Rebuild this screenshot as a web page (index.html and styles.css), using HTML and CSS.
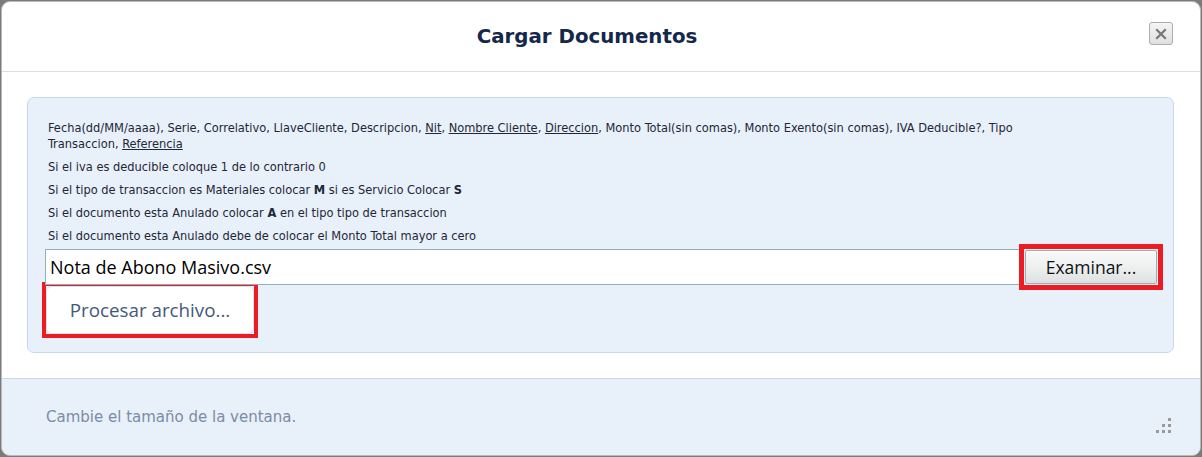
FILE: index.html
```html
<!DOCTYPE html>
<html lang="es">
<head>
<meta charset="utf-8">
<title>Cargar Documentos</title>
<link rel="stylesheet" href="styles.css">
</head>
<body>
<div class="dialog">
  <header class="dlg-head">
    <h1 class="dlg-title">Cargar Documentos</h1>
    <button class="close-btn" aria-label="Cerrar">
      <svg width="12" height="12" viewBox="0 0 12 12"><path d="M2 2 L10 10 M10 2 L2 10" stroke="#777" stroke-width="2.2" stroke-linecap="square"/></svg>
    </button>
  </header>
  <main class="dlg-body">
    <section class="panel">
      <p class="info">Fecha(dd/MM/aaaa), Serie, Correlativo, LlaveCliente, Descripcion, <u>Nit</u>, <u>Nombre Cliente</u>, <u>Direccion</u>, Monto Total(sin comas), Monto Exento(sin comas), IVA Deducible?, Tipo<br>Transaccion, <u>Referencia</u></p>
      <p class="info">Si el iva es deducible coloque 1 de lo contrario 0</p>
      <p class="info">Si el tipo de transaccion es Materiales colocar <b>M</b> si es Servicio Colocar <b>S</b></p>
      <p class="info">Si el documento esta Anulado colocar <b>A</b> en el tipo tipo de transaccion</p>
      <p class="info">Si el documento esta Anulado debe de colocar el Monto Total mayor a cero</p>
      <div class="file-row">
        <div class="file-name">Nota de Abono Masivo.csv</div>
        <span class="mark mark-browse"><button class="browse-btn">Examinar...</button></span>
      </div>
      <span class="mark mark-process"><button class="process-btn">Procesar archivo...</button></span>
    </section>
  </main>
  <footer class="dlg-foot">
    <span class="foot-text">Cambie el tamaño de la ventana.</span>
    <span class="grip" aria-hidden="true">
      <i class="dot d1"></i><i class="dot d2"></i><i class="dot d3"></i><i class="dot d4"></i><i class="dot d5"></i><i class="dot d6"></i>
    </span>
  </footer>
</div>
</body>
</html>
```

FILE: styles.css
```css
* { box-sizing: border-box; }
html, body { margin: 0; padding: 0; }
body {
  background: #7b7b7b;
  width: 1202px;
  height: 457px;
  overflow: hidden;
  font-family: "DejaVu Sans Condensed", "DejaVu Sans", sans-serif;
}
.dialog {
  margin: 1px 1px 0 1px;
  width: 1200px;
  height: 455px;
  background: #fff;
  border: 1px solid #b9b9b9;
  border-radius: 9px;
  overflow: hidden;
  display: flex;
  flex-direction: column;
}
.dlg-head {
  height: 70px;
  flex: none;
  border-bottom: 1px solid #d5dfea;
  display: flex;
  align-items: center;
  justify-content: center;
  position: relative;
}
.dlg-title {
  margin: 0;
  font-family: "DejaVu Sans", sans-serif;
  font-weight: bold;
  font-size: 19.8px;
  color: #13284a;
  padding-right: 28px;
}
.close-btn {
  position: absolute;
  right: 27px;
  top: 20px;
  width: 24px;
  height: 23px;
  padding: 0;
  border: 1px solid #adadad;
  border-radius: 3px;
  background: linear-gradient(#f4f4f4, #e0e0e0);
  display: flex;
  align-items: center;
  justify-content: center;
}
.dlg-body {
  flex: none;
  height: 306px;
  padding: 25px 26px 0 25px;
}
.panel {
  height: 256px;
  background: #e8f0fa;
  border: 1px solid #c6d8ee;
  border-radius: 7px;
  padding: 22px 20px 0 20px;
}
.info {
  margin: 0 0 7px 0;
  font-size: 12.7px;
  line-height: 16px;
  color: #1f2737;
}
.info u { text-decoration: underline; }
.info b { font-weight: bold; }
.file-row {
  display: flex;
  align-items: center;
  margin: -2px -10px 0 -3px;
  height: 36px;
}
.file-name {
  flex: 1;
  height: 36px;
  background: #fff;
  border: 1px solid #8fb2b8;
  border-right: none;
  font-family: "Open Sans", "Noto Sans", sans-serif;
  font-size: 18px;
  line-height: 34px;
  color: #000;
  padding-left: 4px;
  white-space: nowrap;
}
.mark {
  display: block;
  flex: none;
  border: 5px solid #ec1c24;
  padding: 1px;
}
.mark-browse {
  width: 144px;
  height: 46px;
}
.browse-btn {
  display: block;
  width: 132px;
  height: 34px;
  border: 1px solid #a8a8a8;
  border-radius: 2px;
  background: linear-gradient(#f8f9f9 0%, #eef0f0 50%, #dee1e1 100%);
  font-family: "Open Sans", "Noto Sans", sans-serif;
  font-size: 17.5px;
  color: #111;
  padding: 0;
}
.mark-process {
  width: 216px;
  height: 56px;
  margin: -3px 0 0 -6px;
  border-width: 4px;
  padding: 0;
}
.process-btn {
  display: block;
  width: 208px;
  height: 48px;
  background: #fff;
  border: 1px solid #d7e2ef;
  border-radius: 6px;
  font-family: "Open Sans", "Noto Sans", sans-serif;
  font-size: 18.8px;
  color: #44597a;
  padding: 0;
}
.dlg-foot {
  flex: 1;
  background: #e8f0fa;
  border-top: 1px solid #cbd8e8;
  display: flex;
  align-items: center;
  padding: 0 26px 0 44px;
  position: relative;
}
.foot-text {
  font-family: "DejaVu Sans", sans-serif;
  font-size: 15px;
  color: #7b8ca6;
}
.grip {
  position: absolute;
  right: 29px;
  bottom: 21px;
  width: 16px;
  height: 16px;
}
.dot {
  position: absolute;
  width: 3px;
  height: 3px;
  background: #9a9a9a;
}
.d1 { right: 0; top: 0; }
.d2 { right: 0; top: 6px; }
.d3 { right: 6px; top: 6px; }
.d4 { right: 0; top: 12px; }
.d5 { right: 6px; top: 12px; }
.d6 { right: 12px; top: 12px; }
```
